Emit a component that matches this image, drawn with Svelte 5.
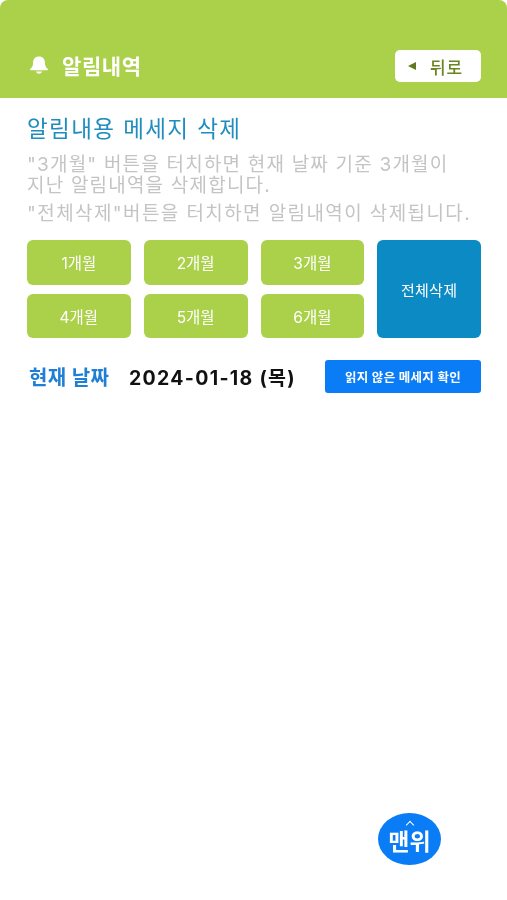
<script>
  const months = ['1개월', '2개월', '3개월', '4개월', '5개월', '6개월'];
</script>

<div class="page">
  <header class="header">
    <div class="title">
      <svg class="bell" viewBox="0 0 20 20" width="20" height="20" aria-hidden="true">
        <path d="M10 1.500c-3.800 0-6 2.700-6 6.200 0 3-.8 4.600-2.600 6-.7.6-.3 1.500.5 1.500h16.200c.8 0 1.200-.9.5-1.500-1.800-1.400-2.600-3-2.600-6 0-3.500-2.200-6.200-6-6.200z" fill="#fff"/>
        <path d="M7 16.500h6c-.3 1.300-1.500 2.200-3 2.200s-2.700-.9-3-2.200z" fill="#fff"/>
      </svg>
      <span>알림내역</span>
    </div>
    <button class="back"><span class="tri"></span><span>뒤로</span></button>
  </header>

  <main class="content">
    <h1>알림내용 메세지 삭제</h1>
    <p class="line first">"3개월" 버튼을 터치하면 현재 날짜 기준 3개월이<br />지난 알림내역을 삭제합니다.</p>
    <p class="line second">"전체삭제"버튼을 터치하면 알림내역이 삭제됩니다.</p>

    <div class="grid">
      {#each months as m}
        <button class="month">{m}</button>
      {/each}
      <button class="all">전체삭제</button>
    </div>

    <div class="date-row">
      <span class="label">현재 날짜</span>
      <span class="date">2024-01-18 (목)</span>
      <button class="unread">읽지 않은 메세지 확인</button>
    </div>
  </main>

  <button class="top"><span class="caret"></span><span>맨위</span></button>
</div>

<style>
  :global(body) {
    margin: 0;
    background: #fff;
  }
  .page {
    position: relative;
    width: 507px;
    height: 900px;
    overflow: hidden;
    background: #fff;
    font-family: Inter, "Noto Sans CJK KR", "Noto Sans", sans-serif;
    filter: blur(0.6px);
  }
  button {
    font-family: inherit;
    border: none;
    padding: 0;
    cursor: pointer;
  }
  .header {
    box-sizing: border-box;
    height: 98px;
    background: #abd04a;
    border-radius: 8px 8px 0 0;
    display: flex;
    align-items: flex-end;
    justify-content: space-between;
    padding: 0 26px 16px 29px;
  }
  .title {
    display: flex;
    align-items: center;
    gap: 13px;
    height: 32px;
    margin-bottom: 1px;
    color: #fff;
    font-size: 21px;
    font-weight: 700;
    letter-spacing: 0.6px;
  }
  .bell {
    display: block;
  }
  .back {
    width: 86px;
    height: 32px;
    background: #fff;
    border-radius: 5px;
    display: flex;
    align-items: center;
    gap: 14px;
    padding-left: 13px;
    box-sizing: border-box;
    color: #6b8523;
    font-size: 17px;
    font-weight: 500;
    letter-spacing: 0.8px;
  }
  .tri {
    width: 0;
    height: 0;
    border-top: 4px solid transparent;
    border-bottom: 4px solid transparent;
    border-right: 8px solid #5f7a1c;
  }
  .content {
    padding: 0 26px 0 27px;
  }
  h1 {
    margin: 16px 0 0;
    font-size: 22.500px;
    line-height: 30px;
    font-weight: 400;
    color: #1f8dbd;
    letter-spacing: 1.400px;
  }
  .line {
    margin: 0;
    color: #c4c4c4;
    font-size: 19px;
    line-height: 21px;
    white-space: nowrap;
  }
  .first {
    margin-top: 10px;
    letter-spacing: 1.200px;
  }
  .second {
    margin-top: 7px;
    letter-spacing: 1.400px;
  }
  .grid {
    margin-top: 16px;
    display: grid;
    grid-template-columns: repeat(4, 1fr);
    grid-template-rows: 44.500px 44.500px;
    column-gap: 13px;
    row-gap: 9px;
  }
  .month,
  .all {
    color: #fff;
    font-size: 15.500px;
    border-radius: 6px;
  }
  .month {
    background: #abd04a;
  }
  .all {
    grid-column: 4;
    grid-row: 1 / span 2;
    background: #0c8ac4;
    font-size: 15px;
    letter-spacing: 0.3px;
  }
  .month:nth-child(4) {
    grid-column: 1;
  }
  .date-row {
    margin-top: 22px;
    height: 33px;
    display: flex;
    align-items: center;
  }
  .label {
    width: 100px;
    margin-left: 2px;
    color: #1f7fd6;
    font-size: 20px;
    font-weight: 700;
    letter-spacing: 0.4px;
  }
  .date {
    color: #111;
    font-size: 19.500px;
    font-weight: 700;
    letter-spacing: 1.300px;
    white-space: nowrap;
  }
  .unread {
    margin-left: auto;
    width: 156px;
    height: 33px;
    background: #0a7cf5;
    color: #fff;
    font-size: 12.500px;
    font-weight: 700;
    letter-spacing: 0.3px;
    border-radius: 3px;
  }
  .top {
    position: absolute;
    left: 378px;
    top: 813px;
    width: 63px;
    height: 52px;
    border-radius: 50%;
    background: #0a7cf5;
    color: #fff;
    font-size: 23px;
    font-weight: 700;
    line-height: 24px;
    display: flex;
    flex-direction: column;
    align-items: center;
    padding-top: 9px;
    box-sizing: border-box;
  }
  .caret {
    width: 5px;
    height: 5px;
    border-left: 1.500px solid #fff;
    border-top: 1.500px solid #fff;
    transform: rotate(45deg);
    margin-bottom: 2px;
  }
</style>
